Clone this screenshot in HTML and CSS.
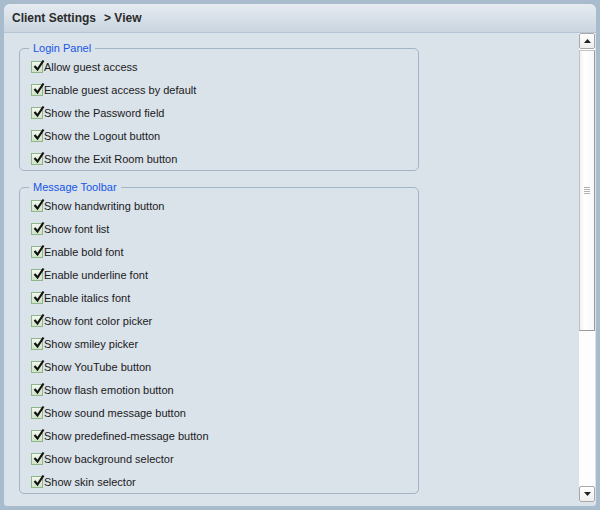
FILE: index.html
```html
<!DOCTYPE html>
<html>
<head>
<meta charset="utf-8">
<link rel="stylesheet" href="styles.css">
</head>
<body>
<div class="window">
  <div class="header"><span>Client Settings</span><span class="crumb">&gt; View</span></div>
  <div class="main">
    <div class="content">
      <fieldset class="group">
        <legend>Login Panel</legend>
        <div class="row"><span class="cb"><svg viewBox="0 0 14 14" width="14" height="14"><path d="M2.5 7 L5.5 10.5 L11.5 1.5" fill="none" stroke="#111" stroke-width="2.2"/></svg></span>Allow guest access</div>
        <div class="row"><span class="cb"><svg viewBox="0 0 14 14" width="14" height="14"><path d="M2.5 7 L5.5 10.5 L11.5 1.5" fill="none" stroke="#111" stroke-width="2.2"/></svg></span>Enable guest access by default</div>
        <div class="row"><span class="cb"><svg viewBox="0 0 14 14" width="14" height="14"><path d="M2.5 7 L5.5 10.5 L11.5 1.5" fill="none" stroke="#111" stroke-width="2.2"/></svg></span>Show the Password field</div>
        <div class="row"><span class="cb"><svg viewBox="0 0 14 14" width="14" height="14"><path d="M2.5 7 L5.5 10.5 L11.5 1.5" fill="none" stroke="#111" stroke-width="2.2"/></svg></span>Show the Logout button</div>
        <div class="row"><span class="cb"><svg viewBox="0 0 14 14" width="14" height="14"><path d="M2.5 7 L5.5 10.5 L11.5 1.5" fill="none" stroke="#111" stroke-width="2.2"/></svg></span>Show the Exit Room button</div>
      </fieldset>
      <fieldset class="group">
        <legend>Message Toolbar</legend>
        <div class="row"><span class="cb"><svg viewBox="0 0 14 14" width="14" height="14"><path d="M2.5 7 L5.5 10.5 L11.5 1.5" fill="none" stroke="#111" stroke-width="2.2"/></svg></span>Show handwriting button</div>
        <div class="row"><span class="cb"><svg viewBox="0 0 14 14" width="14" height="14"><path d="M2.5 7 L5.5 10.5 L11.5 1.5" fill="none" stroke="#111" stroke-width="2.2"/></svg></span>Show font list</div>
        <div class="row"><span class="cb"><svg viewBox="0 0 14 14" width="14" height="14"><path d="M2.5 7 L5.5 10.5 L11.5 1.5" fill="none" stroke="#111" stroke-width="2.2"/></svg></span>Enable bold font</div>
        <div class="row"><span class="cb"><svg viewBox="0 0 14 14" width="14" height="14"><path d="M2.5 7 L5.5 10.5 L11.5 1.5" fill="none" stroke="#111" stroke-width="2.2"/></svg></span>Enable underline font</div>
        <div class="row"><span class="cb"><svg viewBox="0 0 14 14" width="14" height="14"><path d="M2.5 7 L5.5 10.5 L11.5 1.5" fill="none" stroke="#111" stroke-width="2.2"/></svg></span>Enable italics font</div>
        <div class="row"><span class="cb"><svg viewBox="0 0 14 14" width="14" height="14"><path d="M2.5 7 L5.5 10.5 L11.5 1.5" fill="none" stroke="#111" stroke-width="2.2"/></svg></span>Show font color picker</div>
        <div class="row"><span class="cb"><svg viewBox="0 0 14 14" width="14" height="14"><path d="M2.5 7 L5.5 10.5 L11.5 1.5" fill="none" stroke="#111" stroke-width="2.2"/></svg></span>Show smiley picker</div>
        <div class="row"><span class="cb"><svg viewBox="0 0 14 14" width="14" height="14"><path d="M2.5 7 L5.5 10.5 L11.5 1.5" fill="none" stroke="#111" stroke-width="2.2"/></svg></span>Show YouTube button</div>
        <div class="row"><span class="cb"><svg viewBox="0 0 14 14" width="14" height="14"><path d="M2.5 7 L5.5 10.5 L11.5 1.5" fill="none" stroke="#111" stroke-width="2.2"/></svg></span>Show flash emotion button</div>
        <div class="row"><span class="cb"><svg viewBox="0 0 14 14" width="14" height="14"><path d="M2.5 7 L5.5 10.5 L11.5 1.5" fill="none" stroke="#111" stroke-width="2.2"/></svg></span>Show sound message button</div>
        <div class="row"><span class="cb"><svg viewBox="0 0 14 14" width="14" height="14"><path d="M2.5 7 L5.5 10.5 L11.5 1.5" fill="none" stroke="#111" stroke-width="2.2"/></svg></span>Show predefined-message button</div>
        <div class="row"><span class="cb"><svg viewBox="0 0 14 14" width="14" height="14"><path d="M2.5 7 L5.5 10.5 L11.5 1.5" fill="none" stroke="#111" stroke-width="2.2"/></svg></span>Show background selector</div>
        <div class="row"><span class="cb"><svg viewBox="0 0 14 14" width="14" height="14"><path d="M2.5 7 L5.5 10.5 L11.5 1.5" fill="none" stroke="#111" stroke-width="2.2"/></svg></span>Show skin selector</div>
      </fieldset>
    </div>
    <div class="scrollbar">
      <div class="sbtn"><svg viewBox="0 0 7 4" width="7" height="4"><path d="M0 4 L3.5 0 L7 4 Z" fill="#222"/></svg></div>
      <div class="track">
        <div class="thumb"><span class="grip"></span></div>
      </div>
      <div class="sbtn"><svg viewBox="0 0 7 4" width="7" height="4"><path d="M0 0 L3.5 4 L7 0 Z" fill="#222"/></svg></div>
    </div>
  </div>
</div>
</body>
</html>
```

FILE: styles.css
```css
html, body {
  margin: 0;
  padding: 0;
}
body {
  background: #a9bccd;
  font-family: "Liberation Sans", Arial, sans-serif;
  font-size: 11px;
  color: #1a1a1a;
  width: 600px;
  height: 510px;
  overflow: hidden;
}
.window {
  margin: 4px;
  width: 592px;
  height: 502px;
  border-radius: 6px 6px 3px 3px;
  background: #dae2ea;
  display: flex;
  flex-direction: column;
  overflow: hidden;
}
.header {
  height: 29px;
  flex: none;
  box-sizing: border-box;
  padding: 0 0 0 8px;
  display: flex;
  align-items: center;
  gap: 8px;
  font-weight: bold;
  font-size: 12px;
  color: #2b2b2b;
  background: linear-gradient(#e6ebf1, #c9d5e0);
  border-bottom: 1px solid #b6c5d3;
}
.main {
  flex: 1;
  display: flex;
  min-height: 0;
}
.content {
  flex: 1;
  padding: 9px 0 0 15px;
}
.group {
  margin: 0 0 10px 0;
  width: 400px;
  box-sizing: border-box;
  border: 1px solid #a3b4c6;
  border-radius: 5px;
  padding: 1px 0 0 11px;
}
.group legend {
  color: #1656e6;
  padding: 0 4px;
  margin-left: -2px;
  font-size: 11px;
}
.row {
  height: 23px;
  display: flex;
  align-items: center;
  white-space: nowrap;
}
.cb {
  position: relative;
  width: 10px;
  height: 10px;
  border: 1px solid #8fb58a;
  background: linear-gradient(#f2f8ee, #cfe3c6);
  margin-right: 1px;
  flex: none;
}
.cb svg {
  position: absolute;
  left: 0;
  top: -3px;
}
.scrollbar {
  width: 16px;
  flex: none;
  margin-right: 1px;
  margin-bottom: 4px;
  display: flex;
  flex-direction: column;
  background: #fff;
}
.sbtn {
  height: 16px;
  flex: none;
  box-sizing: border-box;
  border: 1px solid #a8a8a8;
  border-radius: 2px;
  background: linear-gradient(#ffffff, #eeeeee);
  display: flex;
  align-items: center;
  justify-content: center;
}
.track {
  flex: 1;
  background: #fdfdfd;
  padding-top: 1px;
}
.thumb {
  height: 281px;
  box-sizing: border-box;
  border: 1px solid #c4c4c4;
  border-right-color: #9a9a9a;
  border-bottom-color: #9a9a9a;
  background: linear-gradient(90deg, #f0f0f0, #ffffff 30%, #f7f7f7);
  display: flex;
  align-items: center;
  justify-content: center;
}
.grip {
  width: 6px;
  height: 7px;
  background: repeating-linear-gradient(#b0b0b0 0 1px, transparent 1px 2px);
}
```
